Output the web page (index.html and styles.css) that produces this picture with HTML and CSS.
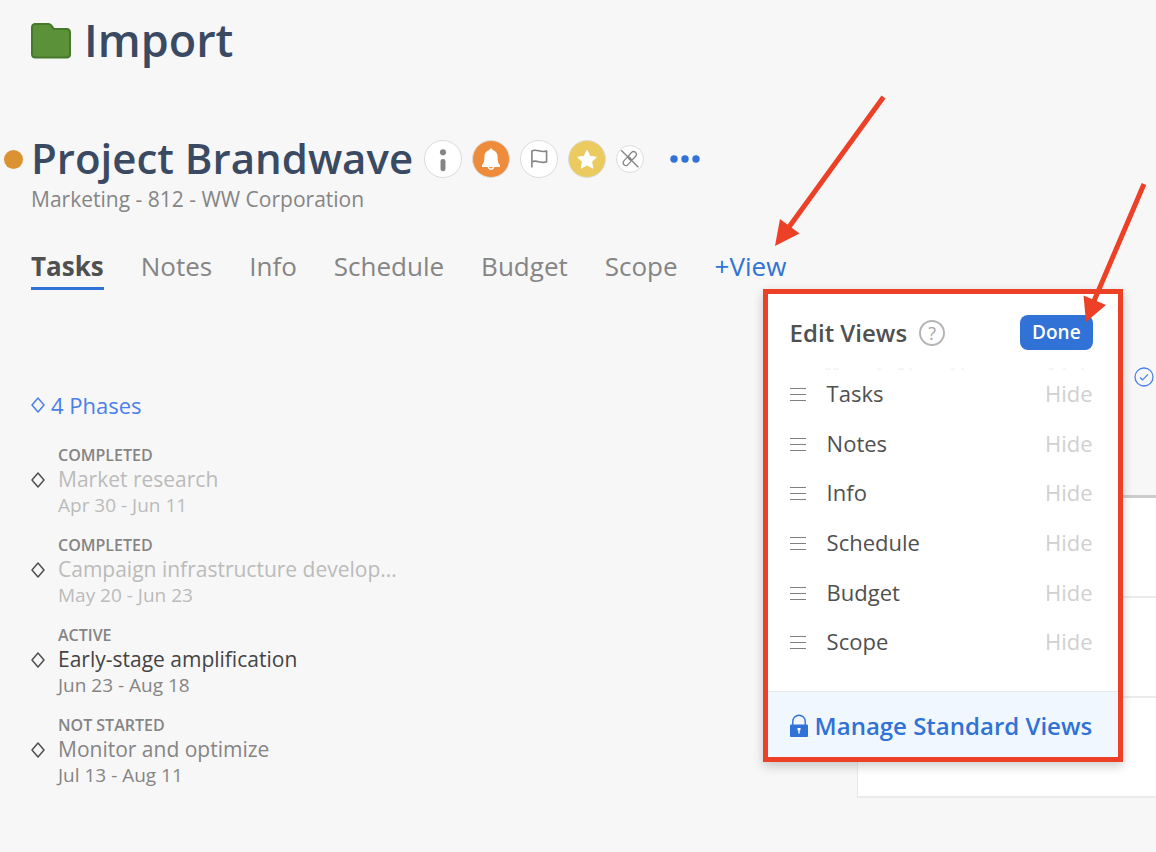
FILE: index.html
```html
<!DOCTYPE html>
<html lang="en">

<head>
    <meta charset="UTF-8">
    <meta name="viewport" content="width=device-width, initial-scale=1.0">
    <title>Project Brandwave</title>
    <link rel="stylesheet" href="styles.css">
</head>

<body>
    <div class="main">

        <!-- folder title -->
        <div class="folder">
            <svg class="folder-icon" width="40" height="36" viewBox="0 0 40 36">
                <path d="M4.500 1H17.500Q19 1 20 2.200L23 6H35.500Q39 6 39 9.500V31.500Q39 34.500 35.500 34.500H4.500Q1 34.500 1 31V4.500Q1 1 4.500 1Z" fill="#5b9138" stroke="#47782b" stroke-width="2" />
            </svg>
            <h1>Import</h1>
        </div>

        <!-- project header -->
        <div class="project">
            <span class="status"></span>
            <h2>Project Brandwave</h2>
            <div class="actions">
                <button class="round" aria-label="Info">
                    <svg width="38" height="38" viewBox="0 0 38 38">
                        <circle cx="19" cy="12" r="3.200" fill="#858585" />
                        <rect x="16.400" y="19" width="5.200" height="13" rx="2.500" fill="#858585" />
                    </svg>
                </button>
                <button class="round orange" aria-label="Notifications">
                    <svg width="38" height="38" viewBox="0 0 38 38">
                        <path d="M19 8c1 0 1.600.7 1.700 1.600 3.500.9 5.300 3.700 5.300 7.400 0 5 .8 7 2.500 8.500v2h-19v-2c1.700-1.500 2.500-3.500 2.500-8.500 0-3.700 1.800-6.500 5.300-7.400C17.400 8.700 18 8 19 8z" fill="#fff" />
                        <path d="M16.300 27.500c.2 3 5.200 3 5.400 0" fill="none" stroke="#fff" stroke-width="1.500" />
                    </svg>
                </button>
                <button class="round" aria-label="Flag">
                    <svg width="38" height="38" viewBox="0 0 38 38">
                        <path d="M11.500 28V10.500c5-3 9 2.500 15.500 0v11.500c-6.500 2.500-10.500-3-15.500 0" fill="none" stroke="#858585" stroke-width="1.700" stroke-linejoin="round" />
                    </svg>
                </button>
                <button class="round yellow" aria-label="Favorite">
                    <svg width="38" height="38" viewBox="0 0 38 38">
                        <path d="M19 10l2.900 6.200 6.700.9-4.900 4.600 1.300 6.800-6-3.300-6 3.300 1.300-6.800-4.900-4.600 6.700-.9z" fill="#fff" stroke="#fff" stroke-width="1.200" stroke-linejoin="round" />
                    </svg>
                </button>
                <button class="round small" aria-label="Remove link">
                    <svg width="28" height="28" viewBox="0 0 28 28">
                        <g fill="none" stroke="#858585" stroke-width="1.300">
                            <rect x="-5" y="-3" width="10" height="6" rx="3" transform="translate(16.500 10.500) rotate(-48)" />
                            <rect x="-5" y="-3" width="10" height="6" rx="3" transform="translate(11 16.500) rotate(-48)" />
                            <path d="M4.500 4.500L23 23" stroke-width="1.500" />
                        </g>
                    </svg>
                </button>
                <button class="more" aria-label="More">
                    <svg width="30" height="8" viewBox="0 0 30 8" fill="#3072d6">
                        <circle cx="4" cy="4" r="3.700" />
                        <circle cx="15" cy="4" r="3.700" />
                        <circle cx="26" cy="4" r="3.700" />
                    </svg>
                </button>
            </div>
        </div>
        <p class="subtitle">Marketing - 812 - WW Corporation</p>

        <!-- view tabs -->
        <nav class="tabs">
            <a class="active" href="#">Tasks</a>
            <a href="#">Notes</a>
            <a href="#">Info</a>
            <a href="#">Schedule</a>
            <a href="#">Budget</a>
            <a href="#">Scope</a>
            <div class="add-view">
                <a href="#">+View</a>

                <!-- edit views menu -->
                <div class="popover">
                    <div class="popover-head">
                        <h3>Edit Views</h3>
                        <button class="help" aria-label="Help">?</button>
                        <button class="done">Done</button>
                    </div>
                    <svg class="list-edge" height="2" viewBox="0 0 270 2" width="270">
                        <path d="M0 1h6m2 0h6m38 0h4m17 0h6m5 0h3m39 0h4m6 0h3m85 0h5m9 0h3m15 0h3" stroke="#ececec" stroke-width="1" />
                    </svg>
                    <ul class="views">
                        <li><span class="grip"></span>Tasks<button>Hide</button></li>
                        <li><span class="grip"></span>Notes<button>Hide</button></li>
                        <li><span class="grip"></span>Info<button>Hide</button></li>
                        <li><span class="grip"></span>Schedule<button>Hide</button></li>
                        <li><span class="grip"></span>Budget<button>Hide</button></li>
                        <li><span class="grip"></span>Scope<button>Hide</button></li>
                    </ul>
                    <a class="manage" href="#">
                        <svg width="18" height="24" viewBox="0 0 18 24">
                            <path d="M2.800 11V7.500a6.200 6.200 0 0 1 12.400 0V11" fill="none" stroke="#3072d6" stroke-width="1.400" />
                            <rect y="10.500" width="18" height="12.500" rx="1" fill="#3072d6" />
                            <path d="M7.500 14h3v2.200h-.8V19.500H8.300V16.200h-.8z" fill="#fff" />
                        </svg>
                        Manage Standard Views
                    </a>
                </div>
            </div>
        </nav>

        <div class="content">
            <!-- phases -->
            <div class="phases">
                <a class="phases-title" href="#">
                    <svg class="diamond" width="14" height="16" viewBox="0 0 14 16"><path d="M7 1L13 8L7 15L1 8Z" /></svg>
                    4 Phases
                </a>
                <ul>
                    <li class="completed">
                        <svg class="diamond" width="14" height="16" viewBox="0 0 14 16"><path d="M7 1L13 8L7 15L1 8Z" /></svg>
                        <div class="state">COMPLETED</div>
                        <div class="name">Market research</div>
                        <div class="dates">Apr 30 - Jun 11</div>
                    </li>
                    <li class="completed">
                        <svg class="diamond" width="14" height="16" viewBox="0 0 14 16"><path d="M7 1L13 8L7 15L1 8Z" /></svg>
                        <div class="state">COMPLETED</div>
                        <div class="name">Campaign infrastructure develop...</div>
                        <div class="dates">May 20 - Jun 23</div>
                    </li>
                    <li class="current">
                        <svg class="diamond" width="14" height="16" viewBox="0 0 14 16"><path d="M7 1L13 8L7 15L1 8Z" /></svg>
                        <div class="state">ACTIVE</div>
                        <div class="name">Early-stage amplification</div>
                        <div class="dates">Jun 23 - Aug 18</div>
                    </li>
                    <li>
                        <svg class="diamond" width="14" height="16" viewBox="0 0 14 16"><path d="M7 1L13 8L7 15L1 8Z" /></svg>
                        <div class="state">NOT STARTED</div>
                        <div class="name">Monitor and optimize</div>
                        <div class="dates">Jul 13 - Aug 11</div>
                    </li>
                </ul>
            </div>

            <!-- task board -->
            <div class="board">
                <svg class="check" width="20" height="20" viewBox="0 0 20 20" fill="none" stroke="#4a80e8">
                    <circle cx="10" cy="10" r="9" stroke-width="1.300" />
                    <path d="M6 10.500l2.500 2.300 5.500-5.500" stroke-width="1.200" />
                </svg>
                <div class="rows">
                    <div class="row"></div>
                    <div class="row"></div>
                    <div class="row"></div>
                </div>
            </div>
        </div>

        <!-- arrows -->
        <svg class="arrows" width="1156" height="340" viewBox="0 0 1156 340" fill="#ec4126" stroke="#ec4126">
            <path d="M883.500 97L789 227M1144 184L1094 301" stroke-width="5" />
            <path d="M775 246L780 219L799.500 233.500ZM1086 322L1083.500 295.500L1106 305Z" stroke="none" />
        </svg>
    </div>
</body>

</html>
```
FILE: styles.css
```css
* {
    box-sizing: border-box;
}

body,
h1,
h2,
h3,
p,
ul {
    margin: 0;
    padding: 0;
}

body {
    font-family: "Open Sans", sans-serif;
    color: #858585;
    background-color: #f7f7f7;
}

li {
    list-style: none;
}

a {
    color: inherit;
    text-decoration: none;
}

button {
    font-family: inherit;
    padding: 0;
    border: none;
    background: none;
    cursor: pointer;
}

svg {
    display: block;
}

.main {
    position: relative;
    padding: 10px 0 0 31px;
    overflow: hidden;
    min-height: 100vh;
}

.folder {
    display: flex;
    align-items: center;
    gap: 13px;
}

h1,
h2 {
    padding-bottom: 2px;
    font-weight: 600;
    color: #3b4a63;
}

h1 {
    font-size: 45px;
    line-height: 60px;
}

.project {
    display: flex;
    align-items: center;
    margin-top: 58px;
    margin-left: -27px;
}

.status {
    width: 19px;
    height: 19px;
    margin-right: 8px;
    border-radius: 50%;
    background-color: #db9233;
}

h2 {
    font-size: 42px;
    line-height: 56px;
}

.actions {
    display: flex;
    align-items: center;
    gap: 10px;
    margin-left: 11px;
}

.round {
    display: flex;
    align-items: center;
    justify-content: center;
    width: 38px;
    height: 38px;
    border: 1px solid #dcdcdc;
    border-radius: 50%;
    background-color: #fff;
}

.orange {
    background-color: #ef8c3b;
}

.yellow {
    background-color: #ebcb60;
}

.small {
    width: 28px;
    height: 28px;
}

.more {
    margin-left: 16px;
}

.subtitle {
    font-size: 21px;
    line-height: 22px;
}

.tabs {
    display: flex;
    gap: 37px;
    margin-top: 37px;
    font-size: 26px;
    line-height: 38px;
}

.active {
    padding-bottom: 2px;
    font-weight: 700;
    color: #505050;
    border-bottom: 3px solid #3072d6;
}

.add-view {
    position: relative;
    color: #3072d6;
}

.popover {
    position: absolute;
    top: 42px;
    left: 48px;
    z-index: 1;
    width: 360px;
    border: 5px solid #ec4126;
    background-color: #fff;
    box-shadow: 0 4px 10px rgba(0, 0, 0, .2);
}

.popover-head {
    display: flex;
    align-items: center;
    padding: 21px 25px 18px 22px;
}

h3 {
    font-size: 24px;
    line-height: 34px;
    font-weight: 600;
    color: #505050;
}

.help {
    width: 26px;
    height: 26px;
    margin-left: 12px;
    font-size: 18px;
    line-height: 22px;
    color: #a5a5a5;
    border: 2px solid #b5b5b5;
    border-radius: 50%;
}

.done {
    height: 35px;
    margin-left: auto;
    padding: 0 12px 1px;
    font-size: 19px;
    font-weight: 600;
    color: #fff;
    border-radius: 8px;
    background-color: #3072d6;
}

.list-edge {
    margin-left: 57px;
}

.views {
    display: flex;
    flex-direction: column;
    height: 323px;
    margin-top: -2px;
    padding: 0 25px 25px 22px;
}

.views li {
    display: flex;
    flex: 1;
    align-items: center;
    font-size: 22px;
    color: #505050;
}

.views button {
    margin-left: auto;
    font-size: 22px;
    color: #d0d0d0;
}

.grip {
    width: 16px;
    height: 13px;
    margin-top: 3px;
    margin-right: 21px;
    background: linear-gradient(#808080 1px, transparent 1px) 0 0 / 16px 6px;
}

.manage {
    display: flex;
    align-items: center;
    gap: 7px;
    padding: 17px 22px 14px;
    font-size: 24px;
    line-height: 34px;
    font-weight: 600;
    border-top: 1px solid #e3e8ec;
    background-color: #f0f7ff;
}

.content {
    display: grid;
    grid-template-columns: 1fr 299px;
    margin-top: 76px;
}

.phases-title {
    display: flex;
    align-items: center;
    gap: 6px;
    margin-top: 23px;
    font-size: 22px;
    line-height: 32px;
    color: #4a80e8;
}

.diamond {
    fill: none;
    stroke: #505050;
    stroke-width: 1.5px;
    stroke-linejoin: round;
}

.phases-title .diamond {
    stroke: #4a80e8;
}

.phases ul {
    margin-top: 23px;
}

.phases li {
    display: grid;
    grid-template-columns: 27px 1fr;
    align-items: center;
    margin-bottom: 16px;
}

.phases li .diamond {
    grid-row: 2;
}

.phases li div {
    grid-column: 2;
}

.state {
    font-size: 16px;
    line-height: 23px;
    font-weight: 600;
}

.name {
    font-size: 21px;
    line-height: 25px;
}

.dates {
    font-size: 19px;
    line-height: 26px;
}

.completed .name,
.completed .dates {
    color: #bbb;
}

.current .name {
    color: #444;
}

.check {
    margin: 1px 2px 0 auto;
}

.rows {
    margin-top: 108px;
    border-top: 3px solid #ccc;
    border-left: 1px solid #e8e8e8;
    background-color: #fff;
}

.row {
    height: 100px;
    border-bottom: 2px solid #ebebeb;
}

.arrows {
    position: absolute;
    top: 0;
    left: 0;
    z-index: 2;
    pointer-events: none;
}
```
